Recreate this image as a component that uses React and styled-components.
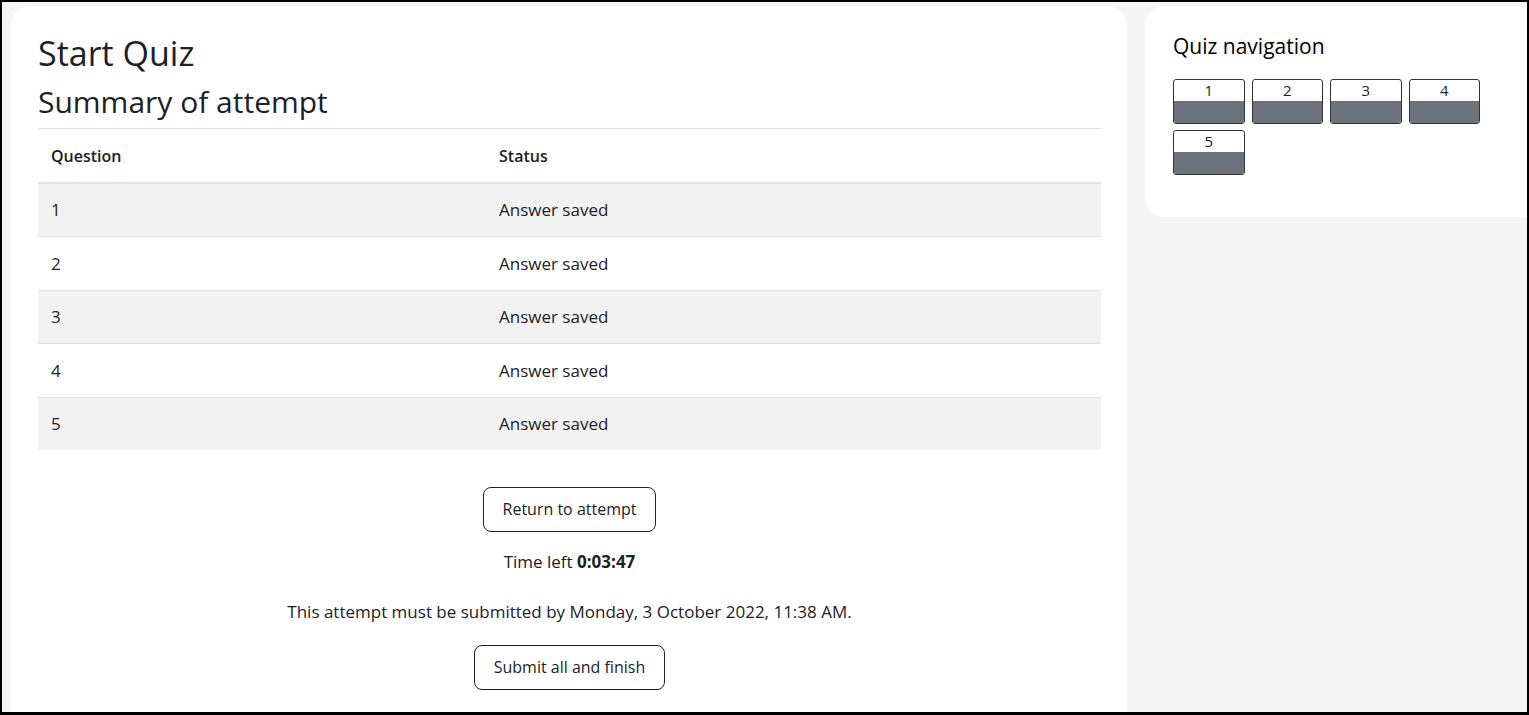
import React from 'react';
import styled, { createGlobalStyle } from 'styled-components';

const GlobalStyle = createGlobalStyle`
    html, body {
        margin: 0;
        padding: 0;
        background: #fff;
    }
    body {
        font-family: "Open Sans", "Liberation Sans", sans-serif;
        color: #1d2125;
    }
`;

const Frame = styled.div`
    box-sizing: border-box;
    width: 1529px;
    height: 715px;
    border: 2px solid #000;
    border-bottom-width: 3px;
    background: #f5f5f5;
    overflow: hidden;
    display: flex;
    gap: 18px;
    padding: 4px 0 0 9px;
`;

const MainCard = styled.main`
    box-sizing: border-box;
    flex: 0 0 1116px;
    background: #fff;
    border-radius: 20px 20px 0 0;
    padding: 27px 26px 0 27px;
`;

const Title = styled.h1`
    margin: 0 0 10px;
    font-size: 34px;
    line-height: 1.2;
    font-weight: 400;
`;

const Subtitle = styled.h2`
    margin: 0 0 8px;
    font-size: 30px;
    line-height: 1.2;
    font-weight: 400;
`;

const SummaryTable = styled.table`
    width: 100%;
    table-layout: fixed;
    border-collapse: collapse;
    font-size: 17px;
    line-height: 25.5px;
`;

const HeadCell = styled.th`
    text-align: left;
    font-size: 16px;
    font-weight: 600;
    padding: 15px 12px 12.5px 13px;
    border-top: 1px solid #dee2e6;
    border-bottom: 2px solid #dee2e6;
    width: ${p => p.$width || 'auto'};
`;

const Row = styled.tr`
    background: ${p => (p.$striped ? '#f2f2f2' : '#fff')};
`;

const Cell = styled.td`
    padding: 13.5px 12px 13.5px 13px;
    border-top: 1px solid #dee2e6;
`;

const Actions = styled.div`
    display: flex;
    flex-direction: column;
    align-items: center;
    padding-top: 36.5px;
    font-size: 17px;
    line-height: 25.5px;
`;

const OutlineButton = styled.button`
    font-family: inherit;
    font-size: 16px;
    line-height: 24px;
    color: #1d2125;
    background: #fff;
    border: 1px solid #1d2125;
    border-radius: 8px;
    padding: 9.5px 19px;
    margin-bottom: ${p => p.$gap || 0}px;
    cursor: pointer;
`;

const InfoLine = styled.div`
    margin-bottom: ${p => p.$gap || 0}px;
`;

const SidePanel = styled.aside`
    box-sizing: border-box;
    flex: 1;
    margin-right: -30px;
    align-self: flex-start;
    background: #fff;
    border-radius: 20px;
    padding: 28px 28px 42px;
`;

const PanelTitle = styled.h3`
    margin: 0 0 20px;
    font-size: 21px;
    line-height: 25px;
    font-weight: 400;
    color: #000;
`;

const NavGrid = styled.div`
    display: grid;
    grid-template-columns: repeat(4, 71.5px);
    column-gap: 7px;
    row-gap: 6px;
`;

const NavButton = styled.button`
    box-sizing: border-box;
    display: flex;
    flex-direction: column;
    padding: 0;
    height: 45px;
    border: 1px solid #333;
    border-radius: 3px;
    overflow: hidden;
    background: #fff;
    font-family: inherit;
    cursor: pointer;
`;

const NavNumber = styled.span`
    height: 21px;
    width: 100%;
    font-size: 15px;
    line-height: 20px;
    color: #1d2125;
    text-align: center;
`;

const NavStatus = styled.span`
    flex: 1;
    width: 100%;
    background: #6a737b;
`;

const questions = [1, 2, 3, 4, 5];

export default function App() {
    return (
        <>
            <GlobalStyle />
            <Frame>
                <MainCard>
                    <Title>Start Quiz</Title>
                    <Subtitle>Summary of attempt</Subtitle>
                    <SummaryTable>
                        <thead>
                            <tr>
                                <HeadCell $width="423px">Question</HeadCell>
                                <HeadCell>Status</HeadCell>
                            </tr>
                        </thead>
                        <tbody>
                            {questions.map((q, i) => (
                                <Row key={q} $striped={i % 2 === 0}>
                                    <Cell>{q}</Cell>
                                    <Cell>Answer saved</Cell>
                                </Row>
                            ))}
                        </tbody>
                    </SummaryTable>
                    <Actions>
                        <OutlineButton $gap={17}>Return to attempt</OutlineButton>
                        <InfoLine $gap={25}>Time left <b>0:03:47</b></InfoLine>
                        <InfoLine $gap={20}>This attempt must be submitted by Monday, 3 October 2022, 11:38 AM.</InfoLine>
                        <OutlineButton>Submit all and finish</OutlineButton>
                    </Actions>
                </MainCard>
                <SidePanel>
                    <PanelTitle>Quiz navigation</PanelTitle>
                    <NavGrid>
                        {questions.map(q => (
                            <NavButton key={q}>
                                <NavNumber>{q}</NavNumber>
                                <NavStatus />
                            </NavButton>
                        ))}
                    </NavGrid>
                </SidePanel>
            </Frame>
        </>
    );
}
